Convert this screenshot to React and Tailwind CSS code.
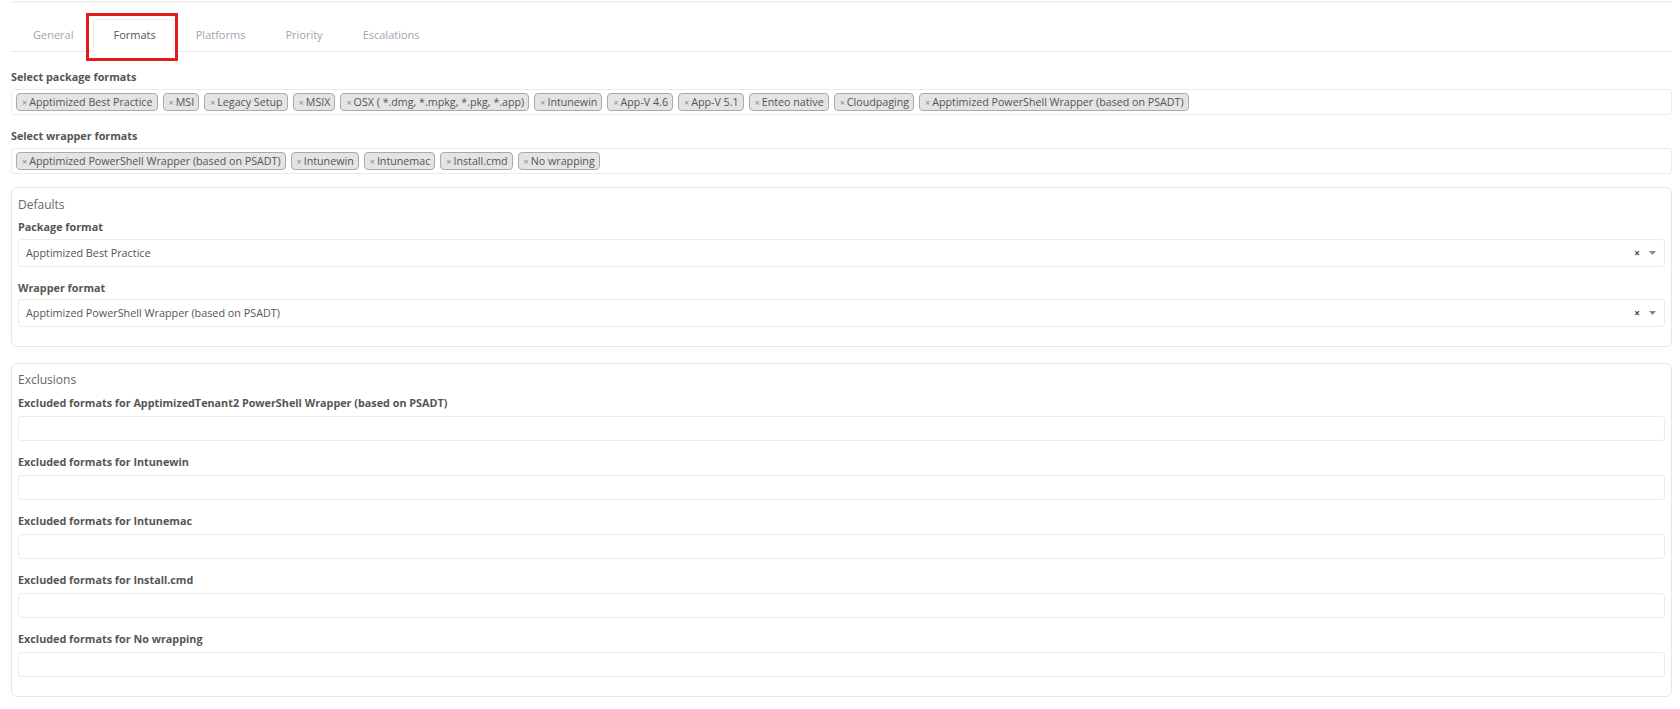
import React from "react";

const font = { fontFamily: '"Open Sans", "Liberation Sans", sans-serif' };

const packageTags = [
  "Apptimized Best Practice",
  "MSI",
  "Legacy Setup",
  "MSIX",
  "OSX ( *.dmg, *.mpkg, *.pkg, *.app)",
  "Intunewin",
  "App-V 4.6",
  "App-V 5.1",
  "Enteo native",
  "Cloudpaging",
  "Apptimized PowerShell Wrapper (based on PSADT)",
];

const wrapperTags = [
  "Apptimized PowerShell Wrapper (based on PSADT)",
  "Intunewin",
  "Intunemac",
  "Install.cmd",
  "No wrapping",
];

const exclusions = [
  "Excluded formats for ApptimizedTenant2 PowerShell Wrapper (based on PSADT)",
  "Excluded formats for Intunewin",
  "Excluded formats for Intunemac",
  "Excluded formats for Install.cmd",
  "Excluded formats for No wrapping",
];

function Tag({ text }) {
  return (
    <span className="flex items-center h-[18px] pl-[5px] pr-[4px] bg-[#e4e4e4] border border-[#aaaaaa] rounded-[4px] text-[10.7px] text-[#555] leading-none whitespace-nowrap">
      <span className="text-[#888] text-[9px] mr-[2px]">×</span>
      {text}
    </span>
  );
}

function TagBox({ tags }) {
  return (
    <div className="flex items-center gap-x-[5px] h-[26px] px-[4px] border border-[#ececec] rounded-[3px] bg-white">
      {tags.map((t, i) => (
        <Tag key={i} text={t} />
      ))}
    </div>
  );
}

function Label({ children, className = "" }) {
  return (
    <div className={"h-[14px] leading-[14px] font-bold text-[10.8px] text-[#555] " + className}>
      {children}
    </div>
  );
}

function Select({ value }) {
  return (
    <div className="flex items-center h-[28px] pl-[7px] pr-[8px] border border-[#ececec] rounded-[3px] bg-white">
      <span className="flex-1 text-[10.8px] text-[#555]">{value}</span>
      <span className="text-[10px] font-bold text-[#444] leading-none mr-[9px]">×</span>
      <svg width="7" height="4" viewBox="0 0 7 4">
        <path d="M0 0 L7 0 L3.5 4 Z" fill="#888" />
      </svg>
    </div>
  );
}

export default function App() {
  const tabs = ["General", "Formats", "Platforms", "Priority", "Escalations"];
  return (
    <div style={font} className="w-full h-[709px] bg-white pl-[11px] pr-[8px] overflow-hidden">
      <div className="mt-[1px] h-[2px] bg-[#f2f2f2]" />

      {/* Tabs */}
      <div className="relative mt-[16px] flex items-end border-b border-[#ececec] pl-[2px]">
        {tabs.map((t) => {
          const active = t === "Formats";
          return (
            <div
              key={t}
              className={
                "h-[33px] flex items-center px-[19px] text-[11px] -mb-px " +
                (active
                  ? "border border-[#ececec] border-b-white bg-white rounded-t-[4px] text-[#555]"
                  : "border border-transparent text-[#a3a3b3]")
              }
            >
              {t}
            </div>
          );
        })}
        <div className="absolute left-[75px] top-[-6px] w-[92px] h-[48px] border-[3px] border-[#e21b1b] pointer-events-none" />
      </div>

      {/* Select package formats */}
      <Label className="mt-[18px]">Select package formats</Label>
      <div className="mt-[5px]">
        <TagBox tags={packageTags} />
      </div>

      <Label className="mt-[14px]">Select wrapper formats</Label>
      <div className="mt-[5px]">
        <TagBox tags={wrapperTags} />
      </div>

      {/* Defaults */}
      <div className="mt-[13px] border border-[#e6e6e6] rounded-[6px] px-[6px] pt-[9px] pb-[19px]">
        <div className="h-[16px] leading-[16px] text-[12px] text-[#666]">Defaults</div>
        <Label className="mt-[7px]">Package format</Label>
        <div className="mt-[5px]">
          <Select value="Apptimized Best Practice" />
        </div>
        <Label className="mt-[14px]">Wrapper format</Label>
        <div className="mt-[4px]">
          <Select value="Apptimized PowerShell Wrapper (based on PSADT)" />
        </div>
      </div>

      {/* Exclusions */}
      <div className="mt-[16px] border border-[#e6e6e6] rounded-[6px] px-[6px] pt-[8px] pb-[19px]">
        <div className="h-[16px] leading-[16px] text-[12px] text-[#666]">Exclusions</div>
        {exclusions.map((e, i) => (
          <div key={i} className={i === 0 ? "mt-[8px]" : "mt-[14px]"}>
            <Label>{e}</Label>
            <div className="mt-[6px] h-[25px] border border-[#ececec] rounded-[3px] bg-white" />
          </div>
        ))}
      </div>
    </div>
  );
}
